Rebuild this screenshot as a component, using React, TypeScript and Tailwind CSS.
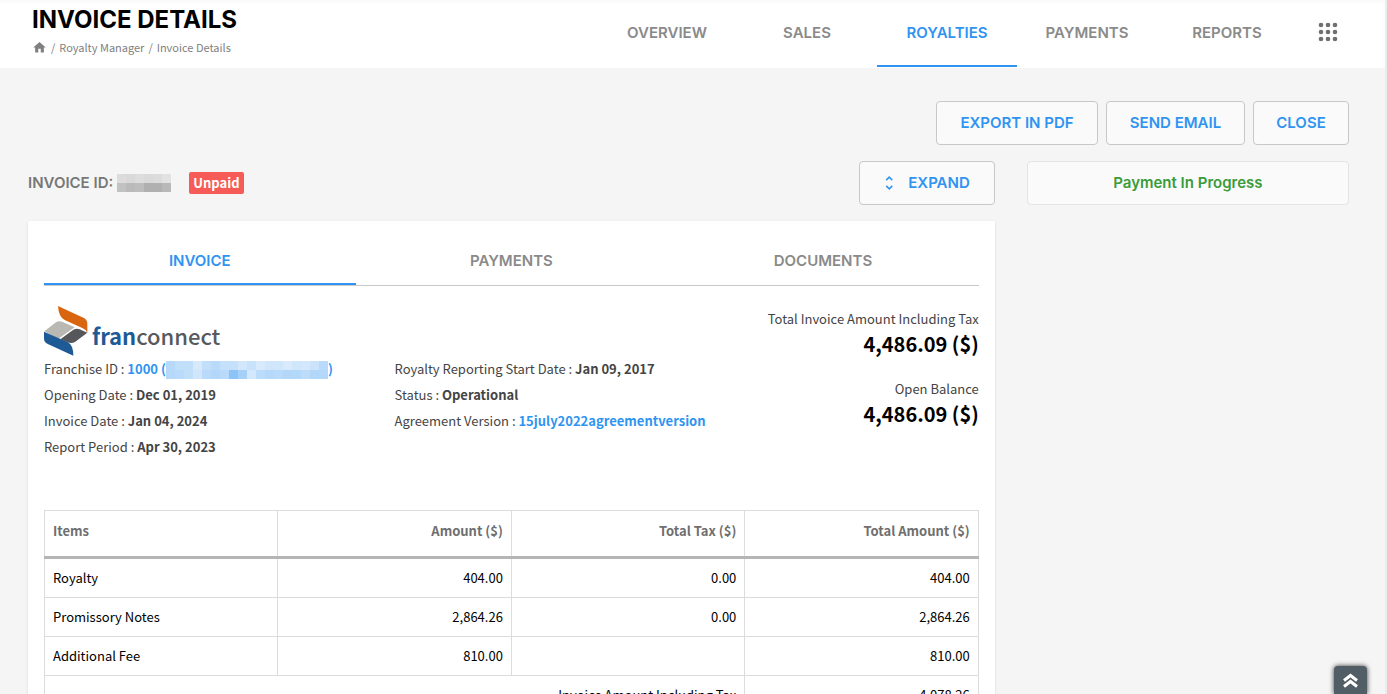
import React from "react";
import { MdHome, MdUnfoldMore } from "react-icons/md";

const navItems = ["OVERVIEW", "SALES", "ROYALTIES", "PAYMENTS", "REPORTS"];
const tabs = ["INVOICE", "PAYMENTS", "DOCUMENTS"];

const rows = [
  { item: "Royalty", amount: "404.00", tax: "0.00", total: "404.00" },
  { item: "Promissory Notes", amount: "2,864.26", tax: "0.00", total: "2,864.26" },
  { item: "Additional Fee", amount: "810.00", tax: "", total: "810.00" },
];

const idMask = [
  ["#dcdcdc", "#d9d9d9", "#dddddd", "#dadada", "#dcdcdc", "#e2e2e2"],
  ["#c2c2c2", "#bababa", "#bdbdbd", "#b0b0b0", "#b0b0b0", "#b8b8b8"],
];

const nameMask = [
  ["#b7d9f9", "#c2dffa", "#c2dffa", "#d6eafc", "#c2dffa", "#b9dafa", "#c5e0fb", "#c5e0fb", "#d2e7fc", "#c8e2fb", "#d8eafc", "#d0e6fb", "#d0e6fb", "#d8eafc", "#d0e6fb", "#d3e8fc", "#cbe4fb", "#b9dafa"],
  ["#b7d9f9", "#b9dafa", "#c2dffa", "#cfe6fb", "#b9dafa", "#b2d7f9", "#b9dafa", "#8dc4f7", "#a5d0f8", "#d3e8fc", "#bbdcfa", "#b7d9f9", "#b9dafa", "#b2d7f9", "#b4d8f9", "#bddcfa", "#b2d7f9", "#b4d8f9"],
];

const Mosaic = ({ colors }: { colors: string[][] }) => (
  <svg
    className="inline-block align-middle"
    width={colors[0].length * 9}
    height={colors.length * 9}
    shapeRendering="crispEdges"
    aria-hidden="true"
  >
    {colors.map((line, y) =>
      line.map((fill, x) => <rect key={`${x}-${y}`} x={x * 9} y={y * 9} width="9" height="9" fill={fill} />)
    )}
  </svg>
);

const Logo = () => (
  <div className="flex h-[50px] items-center gap-1">
    <svg className="h-[50px] w-11 shrink-0" viewBox="0 0 132 150" aria-hidden="true">
      <path fill="#d9650f" d="M42 0 L118 35 Q130 41 130 52 V80 Q127 71 115 66 L62 42 Q44 33 42 0Z" />
      <path fill="#b9b8b2" d="M1 76 L34 50 Q44 43 56 48 L92 64 L43 98 Z" />
      <path fill="#55575a" d="M49 100 L84 74 Q95 65 107 70 L130 80 L94 107 Q83 114 71 109Z" />
      <path fill="#1d5a96" d="M0 77 L72 109 Q88 118 88 149 L13 115 Q0 109 0 98Z" />
    </svg>
    <span className="pt-2 text-[22px] leading-8 text-[#57595c]">
      <span className="font-bold text-[#1d5a96]">fran</span>
      <span className="font-medium">connect</span>
    </span>
  </div>
);

const OutlineButton = ({ className, children }: { className: string; children: React.ReactNode }) => (
  <button
    type="button"
    className={`flex h-11 items-center justify-center rounded border border-[#c8c8c8] bg-[#fafafa] font-['Inter',sans-serif] text-[15px] font-semibold text-[#2f94f1] ${className}`}
  >
    {children}
  </button>
);

const Field = ({ label, children }: { label: string; children: React.ReactNode }) => (
  <div className="h-[26px] whitespace-nowrap">
    {label} : <span className="font-bold">{children}</span>
  </div>
);

const Header = () => (
  <header className="flex h-[68px] justify-between bg-white pl-8 pr-[47px] shadow-[inset_0_4px_4px_-2px_#00000008]">
    <div className="pt-2">
      <h1 className="font-['Inter',sans-serif] text-2xl leading-6 font-bold text-black">INVOICE DETAILS</h1>
      <nav aria-label="Breadcrumb" className="mt-[5px] flex items-center gap-1 text-[11px] leading-5 text-[#808080]">
        <a href="#home" aria-label="Home">
          <MdHome size={15} />
        </a>
        <span>/</span>
        <a href="#manager">Royalty Manager</a>
        <span>/</span>
        <span>Invoice Details</span>
      </nav>
    </div>
    <div className="flex items-start">
      <nav className="flex font-['Inter',sans-serif] text-[15px] font-semibold">
        {navItems.map((item) => (
          <a
            key={item}
            href={`#${item.toLowerCase()}`}
            className={`flex h-[67px] w-[140px] items-center justify-center border-b-2 pt-0.5 ${
              item === "ROYALTIES" ? "border-[#2f94f1] text-[#2f94f1]" : "border-transparent text-[#8a8a8a]"
            }`}
          >
            {item}
          </a>
        ))}
      </nav>
      <button type="button" aria-label="More modules" className="ml-[21px] mt-[22px]">
        <svg width="20" height="20" fill="#6f6f6f">
          {[3, 10, 17].map((y) => [3, 10, 17].map((x) => <circle key={`${x}-${y}`} cx={x} cy={y} r="2.3" />))}
        </svg>
      </button>
    </div>
  </header>
);

const InvoiceTable = () => (
  <table className="mt-[50px] w-full table-fixed border-collapse text-right text-[13px] leading-5 text-black">
    <thead>
      <tr className="h-[47px] border-b-3 border-b-[#b5b5b5] align-top text-[#6f6f6f]">
        {["Items", "Amount ($)", "Total Tax ($)", "Total Amount ($)"].map((head) => (
          <th key={head} scope="col" className="border-x border-t border-[#dcdcdc] px-2 pt-2.5 font-bold first:text-left">
            {head}
          </th>
        ))}
      </tr>
    </thead>
    <tbody>
      {rows.map((row) => (
        <tr key={row.item} className="h-[39px] first:h-10">
          <td className="border border-[#dcdcdc] px-2 text-left">{row.item}</td>
          <td className="border border-[#dcdcdc] px-2">{row.amount}</td>
          <td className="border border-[#dcdcdc] px-2">{row.tax}</td>
          <td className="border border-[#dcdcdc] px-2">{row.total}</td>
        </tr>
      ))}
      <tr className="h-[39px]">
        <td colSpan={3} className="border border-[#dcdcdc] px-2">Invoice Amount Including Tax</td>
        <td className="border border-[#dcdcdc] px-2">4,078.26</td>
      </tr>
    </tbody>
  </table>
);

const InvoiceCard = () => (
  <section className="bg-white p-4 shadow-sm">
    <div role="tablist" className="grid grid-cols-3 border-b border-[#c8c8c8]">
      {tabs.map((tab) => (
        <button
          key={tab}
          type="button"
          role="tab"
          aria-selected={tab === "INVOICE"}
          className={`h-12 border-b-2 pt-0.5 font-['Inter',sans-serif] text-[15px] font-semibold ${
            tab === "INVOICE" ? "border-[#2f94f1] text-[#2f94f1]" : "border-transparent text-[#8a8a8a]"
          }`}
        >
          {tab}
        </button>
      ))}
    </div>

    <div className="mt-5 flex justify-between text-[13px] leading-[26px] text-[#444]">
      <div className="w-3/4">
        <Logo />
        <div className="grid grid-cols-2">
          <div>
            <Field label="Franchise ID">
              <a href="#franchise" className="text-[#2f94f1]">
                1000 (<Mosaic colors={nameMask} />)
              </a>
            </Field>
            <Field label="Opening Date">Dec 01, 2019</Field>
            <Field label="Invoice Date">Jan 04, 2024</Field>
            <Field label="Report Period">Apr 30, 2023</Field>
          </div>
          <div>
            <Field label="Royalty Reporting Start Date">Jan 09, 2017</Field>
            <Field label="Status">Operational</Field>
            <Field label="Agreement Version">
              <a href="#agreement" className="text-[#2f94f1]">15july2022agreementversion</a>
            </Field>
          </div>
        </div>
      </div>
      <div className="flex flex-col gap-5 whitespace-nowrap text-right">
        {["Total Invoice Amount Including Tax", "Open Balance"].map((label) => (
          <div key={label}>
            <p>{label}</p>
            <p className="text-xl leading-6 font-bold text-black">4,486.09 ($)</p>
          </div>
        ))}
      </div>
    </div>

    <InvoiceTable />
  </section>
);

export default function App() {
  return (
    <div className="h-screen overflow-hidden border-r-2 border-[#ececec] bg-[#f5f5f5] font-['Noto_Sans_CJK_SC',sans-serif]">
      <Header />
      <main className="flex flex-col gap-4 pl-7 pr-9 pt-[33px]">
        <div className="flex justify-end gap-2">
          <OutlineButton className="w-[162px]">EXPORT IN PDF</OutlineButton>
          <OutlineButton className="w-[139px]">SEND EMAIL</OutlineButton>
          <OutlineButton className="w-24">CLOSE</OutlineButton>
        </div>

        <div className="grid grid-cols-[3fr_1fr] gap-x-8 gap-y-4">
          <div className="flex items-center justify-between">
            <div className="flex items-center">
              <h2 className="mr-1 font-['Inter',sans-serif] text-[15px] font-semibold text-[#777]">INVOICE ID:</h2>
              <Mosaic colors={idMask} />
              <span className="ml-4.5 rounded-xs bg-[#f75b57] px-1 text-[13px] leading-[22px] font-bold text-white">
                Unpaid
              </span>
            </div>
            <OutlineButton className="w-[136px] gap-2.5 pl-5 pr-6">
              <MdUnfoldMore size={22} />
              EXPAND
            </OutlineButton>
          </div>
          <div className="flex h-11 items-center justify-center rounded border border-[#e4e4e4] bg-[#fafafa] font-['Inter',sans-serif] text-[15px] font-semibold text-[#3a9c3a]">
            Payment In Progress
          </div>
          <InvoiceCard />
        </div>
      </main>

      <button
        type="button"
        aria-label="Back to top"
        className="fixed bottom-0 right-5 flex h-7 w-[33px] items-center justify-center rounded-t bg-[#525e66] shadow-[0_0_5px_#333]"
      >
        <svg width="15" height="15" fill="none" stroke="#fff" strokeWidth="3" aria-hidden="true">
          <path d="M1 7.5 L7.5 2.5 L14 7.5 M1 13.5 L7.5 8.5 L14 13.5" />
        </svg>
      </button>
    </div>
  );
}
